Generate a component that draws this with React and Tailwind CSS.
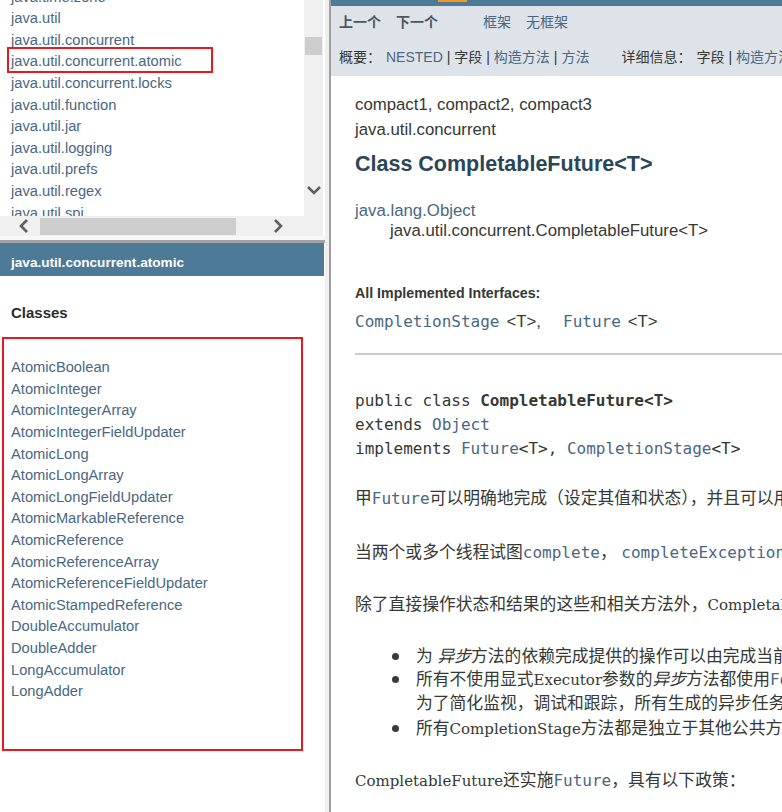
import React from "react";

const packages = [
  "java.time.zone",
  "java.util",
  "java.util.concurrent",
  "java.util.concurrent.atomic",
  "java.util.concurrent.locks",
  "java.util.function",
  "java.util.jar",
  "java.util.logging",
  "java.util.prefs",
  "java.util.regex",
  "java.util.spi",
];

const classes = [
  "AtomicBoolean",
  "AtomicInteger",
  "AtomicIntegerArray",
  "AtomicIntegerFieldUpdater",
  "AtomicLong",
  "AtomicLongArray",
  "AtomicLongFieldUpdater",
  "AtomicMarkableReference",
  "AtomicReference",
  "AtomicReferenceArray",
  "AtomicReferenceFieldUpdater",
  "AtomicStampedReference",
  "DoubleAccumulator",
  "DoubleAdder",
  "LongAccumulator",
  "LongAdder",
];

const mono = "font-['DejaVu_Sans_Mono',monospace] text-[16px]";
const monoLink = "font-['DejaVu_Sans_Mono',monospace] text-[16px] text-[#4a6782]";
const serif = "font-['DejaVu_Serif','Noto_Sans_CJK_SC',serif] text-[15px]";

const Chevron = ({ dir }) => {
  const points = {
    down: "2,2 8,8 14,2",
    left: "9,1 3,7 9,13",
    right: "3,1 9,7 3,13",
  }[dir];
  const size = dir === "down" ? { w: 16, h: 10 } : { w: 12, h: 14 };
  return (
    <svg width={size.w} height={size.h} viewBox={`0 0 ${size.w} ${size.h}`} className="shrink-0">
      <polyline points={points} fill="none" stroke="#606060" strokeWidth="2.6" />
    </svg>
  );
};

export default function App() {
  return (
    <div className="flex h-[812px] w-[782px] overflow-hidden bg-white font-['Liberation_Sans','Noto_Sans_CJK_SC',sans-serif] text-[#353833]">
      <aside className="relative flex w-[325px] shrink-0 flex-col">
        {/* package list frame */}
        <div className="flex h-[236px] flex-col">
          <div className="flex h-[216px]">
            <div className="w-[304px] overflow-hidden pl-[11px] text-[14.7px] leading-[21.6px] text-[#4a6782]">
              <div className="mt-[-13.4px]">
                {packages.map((p) => (
                  <div key={p}>{p}</div>
                ))}
              </div>
            </div>
            <div className="flex w-[19px] flex-col items-center bg-[#f0f0f0]">
              <div className="mt-[37px] h-[18px] w-[17px] bg-[#cdcdcd]" />
              <div className="flex-1" />
              <div className="mb-[21px]">
                <Chevron dir="down" />
              </div>
            </div>
          </div>
          <div className="flex h-[20px] w-[323px] items-center bg-[#f0f0f0]">
            <div className="ml-[18px]">
              <Chevron dir="left" />
            </div>
            <div className="ml-[10px] h-[17px] w-[196px] bg-[#cdcdcd]" />
            <div className="ml-[36px]">
              <Chevron dir="right" />
            </div>
          </div>
        </div>
        <div className="h-[7px] border-b-[3px] border-[#a3a3a3] bg-[#f7f7f7]" />

        {/* package classes frame */}
        <div className="flex-1">
          <div className="h-[33px] w-[324px] bg-[#4d7a97] pl-[11px] pt-[12px] text-[13.6px] font-bold leading-[16px] text-white">
            java.util.concurrent.atomic
          </div>
          <div className="ml-[11px] mt-[27px] text-[15px] font-bold leading-[20px] text-[#2c2c2c]">Classes</div>
          <div className="ml-[11px] mt-[34.2px] text-[14.7px] leading-[21.6px] text-[#4a6782]">
            {classes.map((c) => (
              <div key={c}>{c}</div>
            ))}
          </div>
        </div>

        {/* annotation boxes */}
        <div className="absolute left-[7px] top-[47px] h-[26px] w-[206px] border-2 border-[#e8191f]" />
        <div className="absolute left-[2px] top-[337px] h-[414px] w-[301px] border-2 border-[#e8191f]" />
      </aside>

      <div className="flex w-[6px] shrink-0">
        <div className="w-[4px] bg-[#efefef]" />
        <div className="w-[2px] bg-[#a0a0a0]" />
      </div>

      <main className="min-w-0 flex-1 overflow-hidden whitespace-nowrap">
        <div className="h-[6px] bg-[#4d7a97] pl-[107px]">
          <div className="h-[2px] w-[29px] bg-[#f8981d]" />
        </div>
        <nav className="h-[70px] bg-[#dee3e9] pl-[8px] text-[14px] leading-[20px]">
          <div className="flex pt-[6px]">
            <span className="font-bold text-[#4c5660]">上一个</span>
            <span className="ml-[15px] font-bold text-[#4c5660]">下一个</span>
            <span className="ml-[45px] text-[#4a6782]">框架</span>
            <span className="ml-[15px] text-[#4a6782]">无框架</span>
          </div>
          <div className="mt-[15px] flex">
            <span>概要：</span>
            <span className="ml-[5px] text-[#4a6782]">NESTED</span>
            <span className="ml-[4px]">| 字段 |</span>
            <span className="ml-[4px] text-[#4a6782]">构造方法</span>
            <span className="ml-[4px]">|</span>
            <span className="ml-[4px] text-[#4a6782]">方法</span>
            <span className="ml-[32px]">详细信息：</span>
            <span className="ml-[5px]">字段 |</span>
            <span className="ml-[4px] text-[#4a6782]">构造方法</span>
          </div>
        </nav>

        <div className="pl-[24px]">
          <div className="mt-[17px] text-[16.8px] leading-[24px]">compact1, compact2, compact3</div>
          <div className="mt-[1px] text-[16.8px] leading-[24px]">java.util.concurrent</div>
          <h2 className="mt-[7px] text-[21.5px] font-bold leading-[30px] text-[#2c4557]">Class CompletableFuture&lt;T&gt;</h2>

          <div className="mt-[22px] text-[16.8px] leading-[20px] text-[#4a6782]">java.lang.Object</div>
          <div className="pl-[35px] text-[16.8px] leading-[19px]">java.util.concurrent.CompletableFuture&lt;T&gt;</div>

          <div className="mt-[43px] text-[14.2px] font-bold leading-[20px]">All Implemented Interfaces:</div>
          <div className="mt-[7px] leading-[24px]">
            <span className={monoLink}>CompletionStage</span>
            <span className="ml-[7px] text-[16.8px]">&lt;T&gt;,</span>
            <span className={`${monoLink} ml-[22px]`}>Future</span>
            <span className="ml-[7px] text-[16.8px]">&lt;T&gt;</span>
          </div>

          <div className="mt-[19px] h-[2px] bg-[#cccccc]" />

          <div className={`${mono} mt-[34px] leading-[24px]`}>
            public class <b>CompletableFuture&lt;T&gt;</b>
            <br />
            extends <span className="text-[#4a6782]">Object</span>
            <br />
            implements <span className="text-[#4a6782]">Future</span>&lt;T&gt;, <span className="text-[#4a6782]">CompletionStage</span>&lt;T&gt;
          </div>

          <div className="text-[16.8px] leading-[24px]">
            <p className="mt-[26px]">
              甲<span className={monoLink}>Future</span>可以明确地完成（设定其值和状态），并且可以用作CompletionStage，支持在其完成时触发的依赖功能和动作。
            </p>
            <p className="mt-[30px]">
              当两个或多个线程试图<span className={monoLink}>complete</span>， <span className={monoLink}>completeExceptionally</span>，或<span className={monoLink}>cancel</span>一个CompletableFuture，只有一个成功。
            </p>
            <p className="mt-[28px]">
              除了直接操作状态和结果的这些和相关方法外，<span className={serif}>CompletableFuture</span>实现接口CompletionStage，具有以下策略：
            </p>

            <ul className="mt-[27.5px] pl-[61px] leading-[23px]">
              <li className="relative">
                <span className="absolute left-[-24px] top-[8px] h-[7px] w-[7px] rounded-full bg-[#3a3a3a]" />
                为 <i>异步</i>方法的依赖完成提供的操作可以由完成当前CompletableFuture的线程或完成方法的任何其他调用者执行。
              </li>
              <li className="relative">
                <span className="absolute left-[-24px] top-[8px] h-[7px] w-[7px] rounded-full bg-[#3a3a3a]" />
                所有不使用显式<span className={serif}>Executor</span>参数的<i>异步</i>方法都使用<span className={monoLink}>ForkJoinPool.commonPool()</span>执行
                <br />
                为了简化监视，调试和跟踪，所有生成的异步任务都是标记接口的实例。
              </li>
              <li className="relative mt-[2px]">
                <span className="absolute left-[-24px] top-[8px] h-[7px] w-[7px] rounded-full bg-[#3a3a3a]" />
                所有<span className={serif}>CompletionStage</span>方法都是独立于其他公共方法实现的。
              </li>
            </ul>

            <p className="mt-[28.5px]">
              <span className={serif}>CompletableFuture</span>还实施<span className={monoLink}>Future</span>，具有以下政策：
            </p>
          </div>
        </div>
      </main>
    </div>
  );
}
